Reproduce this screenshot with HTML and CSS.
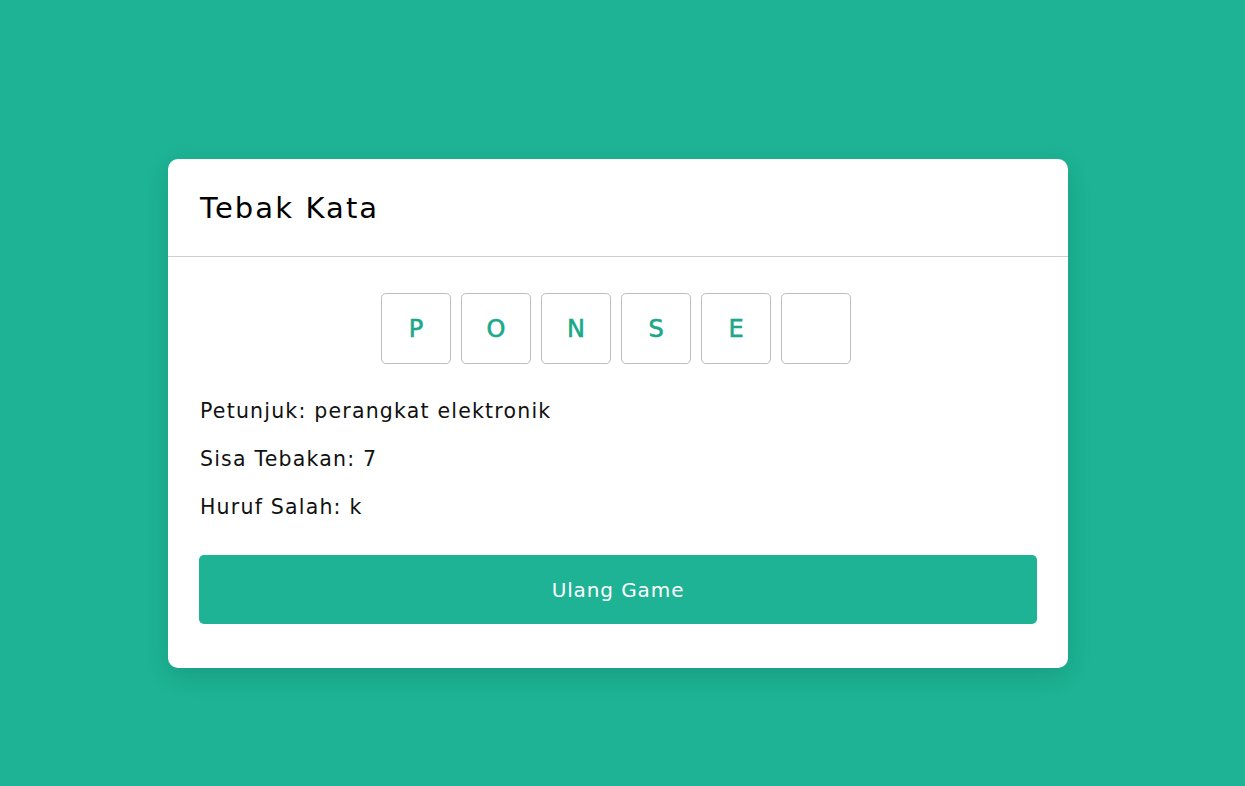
FILE: index.html
```html
<!DOCTYPE html>
<html lang="id">
<head>
<meta charset="utf-8">
<title>Tebak Kata</title>
<link rel="stylesheet" href="styles.css">
</head>
<body>
<main class="page">
  <section class="card">
    <header class="card-header">
      <h1 class="title">Tebak Kata</h1>
    </header>
    <div class="card-body">
      <div class="letters">
        <div class="letter">P</div>
        <div class="letter">O</div>
        <div class="letter">N</div>
        <div class="letter">S</div>
        <div class="letter">E</div>
        <div class="letter"></div>
      </div>
      <p class="info">Petunjuk: perangkat elektronik</p>
      <p class="info">Sisa Tebakan: 7</p>
      <p class="info">Huruf Salah: k</p>
      <button class="btn" type="button">Ulang Game</button>
    </div>
  </section>
</main>
</body>
</html>
```

FILE: styles.css
```css
* { box-sizing: border-box; }
html, body { margin: 0; padding: 0; }
body {
  background: #1db394;
  font-family: "DejaVu Sans", "Open Sans", sans-serif;
  color: #111;
}
.page {
  min-height: 786px;
  display: flex;
  justify-content: center;
  padding-top: 159px;
  padding-right: 9px;
}
.card {
  width: 900px;
  height: 509px;
  background: #fff;
  border-radius: 10px;
  box-shadow: 0 8px 24px rgba(0, 0, 0, 0.12);
  overflow: hidden;
}
.card-header {
  height: 98px;
  border-bottom: 1px solid #cfcfcf;
  padding: 0 32px;
  display: flex;
  align-items: center;
}
.title {
  margin: 0;
  font-size: 29px;
  font-weight: 400;
  letter-spacing: 2.1px;
  color: #000;
}
.card-body {
  padding: 36px 31px 0 31px;
}
.letters {
  display: flex;
  justify-content: center;
  gap: 10px;
  margin-bottom: 23px;
  padding-right: 4px;
}
.letter {
  width: 70px;
  height: 71px;
  border: 1px solid #bdbdbd;
  border-radius: 5px;
  display: flex;
  align-items: center;
  justify-content: center;
  font-size: 24px;
  font-weight: 400;
  -webkit-text-stroke: 0.6px #1aa88a;
  color: #1aa88a;
}
.info {
  margin: 0;
  font-size: 20.5px;
  line-height: 48px;
  letter-spacing: 1.2px;
  padding-left: 1px;
  color: #111;
}
.btn {
  display: block;
  width: 100%;
  height: 69px;
  margin-top: 24px;
  border: none;
  border-radius: 5px;
  background: #1db394;
  color: #fff;
  font-family: inherit;
  font-size: 20px;
  font-weight: 400;
  letter-spacing: 0.9px;
}
```
